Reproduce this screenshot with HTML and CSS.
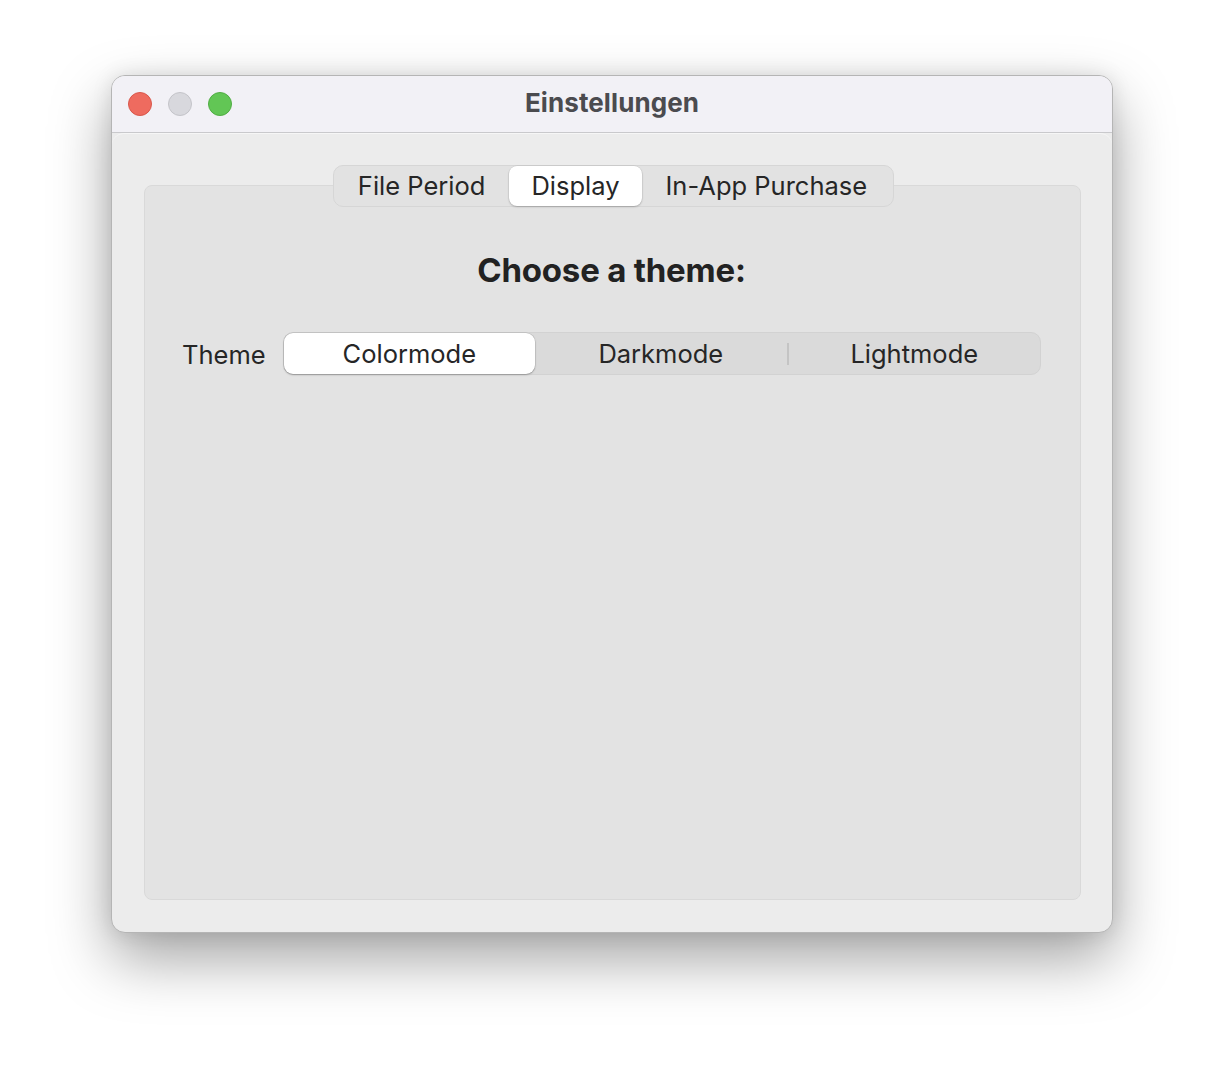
FILE: index.html
```html
<!DOCTYPE html>
<html>
<head>
<meta charset="utf-8">
<link rel="stylesheet" href="styles.css">
</head>
<body>
<div class="window">
  <div class="titlebar">
    <div class="lights">
      <span class="light red"></span>
      <span class="light grey"></span>
      <span class="light green"></span>
    </div>
    <div class="title">Einstellungen</div>
  </div>
  <div class="content">
    <div class="tabs">
      <div class="tab">File Period</div>
      <div class="tab selected">Display</div>
      <div class="tab">In-App Purchase</div>
    </div>
    <div class="tabbox">
      <h1 class="heading">Choose a theme:</h1>
      <div class="row">
        <div class="label">Theme</div>
        <div class="seg">
          <div class="segitem selected">Colormode</div>
          <div class="segitem">Darkmode</div>
          <div class="divider"></div>
          <div class="segitem">Lightmode</div>
        </div>
      </div>
    </div>
  </div>
</div>
</body>
</html>
```

FILE: styles.css
```css
html, body {
  margin: 0;
  padding: 0;
  background: #ffffff;
}
body {
  width: 1224px;
  height: 1080px;
  font-family: Inter, "Noto Sans", "Liberation Sans", sans-serif;
  color: #262626;
}
.window {
  margin: 75px 0 0 111px;
  width: 1002px;
  height: 858px;
  box-sizing: border-box;
  border-radius: 14px;
  background: #ececec;
  border: 1px solid #b5b5b5;
  box-shadow: 0 26px 60px rgba(0,0,0,0.36), 0 0 20px rgba(0,0,0,0.10);
  display: flex;
  flex-direction: column;
  overflow: hidden;
}
.titlebar {
  height: 56px;
  flex: none;
  background: #f2f1f6;
  border-bottom: 1px solid #c9c9cc;
  display: flex;
  align-items: center;
  justify-content: center;
  position: relative;
}
.lights {
  position: absolute;
  left: 16px;
  top: 16px;
  display: flex;
  gap: 16px;
}
.light {
  width: 24px;
  height: 24px;
  border-radius: 50%;
  box-sizing: border-box;
}
.red { background: #ee6b5f; border: 1px solid #d9574b; }
.grey { background: #d8d8dd; border: 1px solid #c4c4c9; }
.green { background: #62c655; border: 1px solid #50ad43; }
.title {
  font-size: 26px;
  font-weight: 700;
  color: #4b4b4f;
  letter-spacing: 0.1px;
  margin-bottom: 3px;
}
.content {
  flex: 1;
  display: flex;
  flex-direction: column;
  align-items: stretch;
  padding: 31px 31px 32px 32px;
  border-top: 1px solid #f6f6f6;
  border-radius: 12px 12px 0 0;
}
.tabs {
  align-self: center;
  position: relative;
  z-index: 1;
  display: flex;
  align-items: center;
  height: 42px;
  box-sizing: border-box;
  padding: 0 1px;
  background: #e2e2e2;
  border: 1px solid #d6d6d6;
  border-radius: 10px;
  margin-bottom: -22px;
  margin-left: 2px;
}
.tab {
  font-size: 25.5px;
  height: 40px;
  line-height: 40px;
  padding: 0 22px;
  color: #262626;
  box-sizing: border-box;
}
.tab:first-child { padding: 0 24px 0 23px; }
.tab:last-child { padding: 0 25px 0 24px; }
.tab.selected {
  background: #ffffff;
  border-radius: 8px;
  height: 40px;
  box-shadow: 0 1px 2px rgba(0,0,0,0.22), 0 0 0 0.5px rgba(0,0,0,0.08);
}
.tabbox {
  flex: 1;
  background: #e3e3e3;
  border: 1px solid #d9d9d9;
  border-radius: 8px;
  padding: 63px 39px 0 37px;
  display: flex;
  flex-direction: column;
  align-items: stretch;
}
.heading {
  margin: 0;
  text-align: center;
  font-size: 33px;
  font-weight: 700;
  line-height: 42px;
  color: #222222;
  letter-spacing: -0.2px;
}
.row {
  margin-top: 41px;
  display: flex;
  align-items: center;
  gap: 17px;
}
.label {
  font-size: 25.5px;
  color: #262626;
  padding-top: 2px;
}
.seg {
  flex: 1;
  height: 43px;
  box-sizing: border-box;
  background: #dadada;
  border: 1px solid #d2d2d2;
  border-radius: 10px;
  display: flex;
  align-items: center;
  padding: 0;
}
.segitem {
  flex: 1;
  text-align: center;
  font-size: 25.5px;
  height: 41px;
  line-height: 41px;
  color: #262626;
}
.segitem.selected {
  background: #ffffff;
  border-radius: 9px;
  box-shadow: 0 1px 2px rgba(0,0,0,0.25), 0 0 0 0.5px rgba(0,0,0,0.12);
}
.divider {
  width: 2px;
  height: 22px;
  background: #c4c4c4;
}
```
